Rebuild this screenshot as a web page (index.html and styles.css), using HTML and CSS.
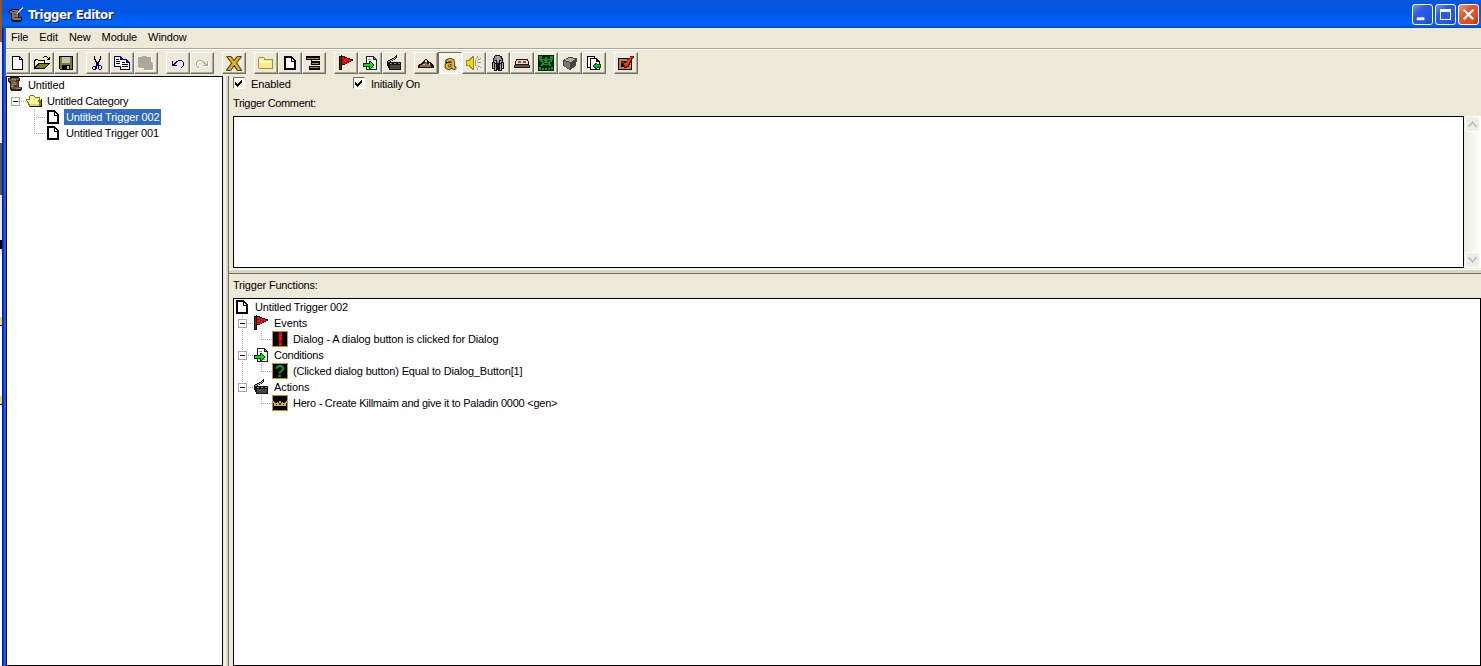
FILE: index.html
```
<!DOCTYPE html>
<html lang="en">
<head>
  <meta charset="UTF-8" />
  <meta name="viewport" content="width=device-width, initial-scale=1.0"/>
  <title>Trigger Editor</title>
  <link rel="stylesheet" href="styles.css">
</head>
<body>

  <!-- Shared icons -->
  <svg class="defs" width="0" height="0">
    <symbol id="scroll" viewBox="0 0 16 16">
      <path d="M1 1h2V0h9v1h1v3h-1v6h3v3h-1v1H4v-1H3V6H2V5H1z" fill="#2e2119"/>
      <path d="M2 2h2V1h8v2h-1v7h3v2H5v-1H4V4H2z" fill="#755746"/>
      <path d="M5 2h4v1H5zM6 5h3v1H6zM5 7h4v1H5zM9 11h4v1H9zM4 9h2v1H4z" fill="#a5836c"/>
      <path d="M9 3h2v2H9zM7 8h3v2H7z" fill="#4a3326"/>
    </symbol>
    <symbol id="page" viewBox="0 0 16 16">
      <path d="M2 1h8v1h1v1h1v1h1v1h1v10H2z" fill="#000"/>
      <path d="M4 3h5v4h3v6H4z" fill="#fff"/>
      <path d="M10 4h1v1h1v1h-2z" fill="#fff"/>
    </symbol>
    <symbol id="flag" viewBox="0 0 16 16">
      <path d="M1 1h2V0h1v1h3v1h2v1h3v1h3v2h-2v1h-2v1H9v1H7v1H4v5H1z" fill="#1c0505"/>
      <path d="M4 2h2v1h3v1h3v1h2v1h-2v1h-2v1H8v1H4z" fill="#e01414"/>
      <path d="M4 4h2v1H4zM7 5h2v1H7zM5 7h2v1H5zM9 6h2v1H9z" fill="#ad0808"/>
      <path d="M2 2h1v12H2z" fill="#5c2b2b"/>
    </symbol>
    <symbol id="cond" viewBox="0 0 16 16">
      <path d="M4 1h8v1h1v1h1v1h1v11H4z" fill="#222"/>
      <path d="M5 2h6v3h3v9H5z" fill="#f4f4f4"/>
      <path d="M12 3v1h1zM6 4h3v1H6zM6 12h6v1H6z" fill="#999"/>
      <path d="M1 8h6V6h2v1h1v1h1v1h1v2h-1v1h-1v1H9v1H7v-2H1z" fill="#003c00"/>
      <path d="M2 9h6V7h1v1h1v1h1v2h-1v1H9v1H8v-2H2z" fill="#08e018"/>
    </symbol>
    <symbol id="clap" viewBox="0 0 16 16">
      <path d="M1 6h1V5h2V4h2V3h2V2h1V1h1V0h1v3h-1v1H9v1H7v1H5v1h10v8H3v-2H2v-2H1z" fill="#141414"/>
      <path d="M2 6h2V5h2V4h2V3h1V2h1v1H9v1H8v1H6v1H4v1H2z" fill="#a8a8a8"/>
      <path d="M4 8h2v1H4zM8 8h2v1H8zM12 8h2v1h-2z" fill="#888"/>
      <path d="M4 10h10v4H4z" fill="#444"/>
    </symbol>
    <symbol id="check" viewBox="0 0 10 10">
      <path d="M1 4h1v1h1v1h1V5h1V4h1V3h1V2h1v3H7v1H6v1H5v1H4v1H3V8H2V7H1z" fill="#000"/>
    </symbol>
  </svg>

  <div class="desktop"><i class="dark"></i><i class="mark"></i><i class="fold"></i><i class="fold low"></i></div>

  <div class="window">
    <div class="titlebar">
      <svg class="icon" viewBox="0 0 16 16" shape-rendering="crispEdges">
        <path d="M1 3h2V2h8v1h1v2h-1v5h3v4h-1v1H4v-1H3V7H2V6H1z" fill="#221811"/>
        <path d="M2 4h2V3h6v8h3v2H5v-1H4V6H2z" fill="#84705c"/>
        <path d="M6 7h2v1H6zM6 10h3v1H6zM4 4h3v1H4z" fill="#4b382a"/>
        <path d="M14 0h1v2h-1v1h-1v1h-1v1h-1v1h-1v1H9V6h1V4h1V3h1V2h1V1h1z" fill="#c9cbd2"/>
      </svg>
      <span class="title">Trigger Editor</span>
      <div class="win-buttons">
        <span class="win-btn"><svg viewBox="0 0 20 20"><path d="M4 13h8v3H4z" fill="#fff"/></svg></span>
        <span class="win-btn"><svg viewBox="0 0 19 19" shape-rendering="crispEdges"><path d="M4 4h11v11H4zM5 7v7h9V7z" fill="#fff" fill-rule="evenodd"/></svg></span>
        <span class="win-btn close"><svg viewBox="0 0 20 20"><path d="M5 5l10 10M15 5L5 15" stroke="#fff" stroke-width="2.4"/></svg></span>
      </div>
    </div>

    <div class="menubar">
      <span>File</span><span>Edit</span><span>New</span><span>Module</span><span>Window</span>
    </div>

    <!-- Toolbar -->
    <div class="toolbar">
      <div class="group">
        <button><svg viewBox="0 0 16 16"><path d="M2 1h8v1h1v1h1v1h1v11H2z" fill="#000"/><path d="M3 2h6v3h3v9H3zM10 3v1h1z" fill="#fff"/></svg></button>
        <button><svg viewBox="0 0 16 16"><path d="M0 5h1V4h3v1h7v3h5v1h-1v1h-1v1h-1v1h-1v1h-1v1H0z" fill="#000"/><path d="M1 6h1V5h2v1h6v2H4v1H3v1H2v1H1z" fill="#ffff80"/><path d="M5 9h9v1h-1v1h-1v1h-1v1H2v-1h1v-1h1v-1h1z" fill="#808000"/><path d="M9 2h1V1h3v1h1v1h1V2h1v3h-3V4h1V3h-1V2h-3v1H9z" fill="#000"/></svg></button>
        <button><svg viewBox="0 0 16 16"><path d="M1 1h14v14H2v-1H1z" fill="#000"/><path d="M2 2h2v6h8V2h2v12h-2v-4H4v4H2z" fill="#808000"/><path d="M4 2h8v6H4zM9 11h2v3H9z" fill="#c0c0c0"/></svg></button>
      </div>
      <div class="group">
        <button><svg viewBox="0 0 16 16"><path d="M4 1h1v3h1v2h1v1h1V6h1V4h1V1h1v4h-1v2H9v2H6V7H5V5H4z" fill="#000"/><path d="M6 9h3v1h2v1h1v3h-1v1H9v-1H8v-3H7v3H6v1H3v-1H2v-2h1v-1h3zM4 12H3v2h2v-2zM9 11v3h2v-3z" fill="#000080" fill-rule="evenodd"/></svg></button>
        <button><svg viewBox="0 0 16 16"><path d="M0 1h7v1h1v1h1v1h4v1h1v1h1v1h1v8H6v-3H0z" fill="#000080"/><path d="M1 2h5v3h1v6H1zM7 5h5v3h3v6H7z" fill="#fff"/><path d="M2 4h3v1H2zM2 6h4v1H2zM2 8h4v1H2zM8 7h3v1H8zM8 9h6v1H8zM8 11h6v1H8z" fill="#000"/></svg></button>
        <button><svg viewBox="0 0 16 16"><path d="M1 2h4V1h5v1h4v6h2v8H7v-2H1z" fill="#fff"/><path d="M0 2h4V1h5v1h4v5h1v1h1v7H6v-2H1v-1H0z" fill="#aca899"/></svg></button>
      </div>
      <div class="group">
        <button><svg viewBox="0 0 16 16"><path d="M2 6h1v3h1V8h1V7h1V6h2V5h4v1h1v1h1v4h-1v1h-1v1h-1v-1h1v-1h1V7h-1V6H8v1H7v1H6v1H5v1h2v1H2z" fill="#000080"/></svg></button>
        <button><svg viewBox="0 0 16 16"><path d="M15 7h-1v3h-1V9h-1V8h-1V7H9V6H5v1H4v1H3v4h1v1h1v1h1v-1H5v-1H4V8h1V7h4v1h1v1h1v1h1v1h-2v1h5z" fill="#fff"/><path d="M14 6h-1v3h-1V8h-1V7h-1V6H8V5H4v1H3v1H2v4h1v1h1v1h1v-1H4v-1H3V7h1V6h4v1h1v1h1v1h1v1H9v1h5z" fill="#aca899"/></svg></button>
      </div>
      <div class="group">
        <button><svg viewBox="0 0 16 16"><text class="glyph outlined" x="8" y="15" font-size="18" textLength="14" lengthAdjust="spacingAndGlyphs">X</text></svg></button>
      </div>
      <div class="group">
        <button><svg viewBox="0 0 16 16"><path d="M0 3h1V2h5v1h1v1h8v10H1v-1H0z" fill="#a8942f"/><path d="M1 3h5v2h8v8H1z" fill="#fbea8a"/><path d="M1 4h4v2h7v2H1z" fill="#fffbd0"/></svg></button>
        <button><svg><use href="#page"/></svg></button>
        <button><svg viewBox="0 0 16 16"><path d="M0 1h14v4H6v1h8v4h-1v1h1v4H3v-4h2V5H0z" fill="#000"/><path d="M1 3h12v1H1zM6 8h7v1H6zM4 12h9v1H4z" fill="#b58a30"/><path d="M6 5h8v1H6zM5 10h9v1H5z" fill="#ece9d8"/></svg></button>
      </div>
      <div class="group">
        <button><svg><use href="#flag"/></svg></button>
        <button><svg><use href="#cond"/></svg></button>
        <button><svg><use href="#clap"/></svg></button>
      </div>
      <div class="group">
        <button><svg viewBox="0 0 16 16"><path d="M0 10h1V9h2V8h1V7h1V6h1V5h1V4h2v1h1v1h1v1h2v1h1v1h1v1h1v3H0z" fill="#24150d"/><path d="M4 9h2V8h1V7h2v2h2v1h2v2H2v-2h2z" fill="#8b6956"/><path d="M7 5h2v2H7zM11 8h1v2h-1zM5 9h2v1H5z" fill="#d0c6bd"/></svg></button>
        <button class="pressed"><svg viewBox="0 0 16 16"><text class="glyph outlined" x="8" y="14" font-size="19">a</text></svg></button>
        <button><svg viewBox="0 0 16 16"><path d="M0 5h3V4h1V3h1V2h1V1h2v14H6v-1H5v-1H4v-1H3v-1H0z" fill="#a38a12"/><path d="M1 6h3V5h1V4h1V3h1v10H6v-1H5v-1H4v-1H1z" fill="#f1d526"/><path d="M9 5h1v6H9zM11 7h4v1h-4zM11 5h1V4h2V3h1v1h-1v1h-2v1h-1zM11 10h1v1h2v1h1v1h-1v-1h-2v-1h-1zM10 3h1V1h1v2h-1v1h-1zM10 12h1v1h1v2h-1v-2h-1z" fill="#999"/></svg></button>
        <button><svg viewBox="0 0 16 16"><path d="M5 0h5v1h2v2h1v4h1v7h-2v2H8v-1H7v1H4v-2H2V7h1V3h1V1h1z" fill="#151518"/><path d="M5 1h5v1h1v2h1v3h-1V5H9v3H7V5H5v2H4V3h1z" fill="#7a8fae"/><path d="M7 1h2v5H7zM5 6h1v2H5zM10 6h1v2h-1z" fill="#c4ad78"/><path d="M3 8h1v5H3zM5 9h1v6H5zM10 9h1v6h-1zM12 8h1v5h-1z" fill="#aaa"/></svg></button>
        <button><svg viewBox="0 0 16 16"><path d="M2 4h12v2h1v4h1v3H0v-3h1V6h1z" fill="#211510"/><path d="M3 5h10v1h1v3H2V6h1z" fill="#ded9cd"/><path d="M4 6h3v2H4zM9 6h3v2H9z" fill="#b73f2b"/><path d="M1 10h14v2H1z" fill="#6d5143"/></svg></button>
        <button><svg viewBox="0 0 16 16"><path d="M0 0h16v16H0z" fill="#002008"/><path d="M1 1h3v3h3V2h2v2h3V1h3v4h-1v2h-2v2h1v2h-2v-1H5v1H3V9h1V7H2V5H1zM1 12h2v3H1zM4 13h2v2H4zM7 13h2v2H7zM10 13h2v2h-2zM13 12h2v3h-2z" fill="#07932b"/><path d="M4 5h2v1h1v1H5V6H4zM12 5h-2v1H9v1h2V6h1zM6 8h4v1H6z" fill="#001f08"/></svg></button>
        <button><svg viewBox="0 0 16 16"><path d="M1 5l6-3 8 1-1 8-6 4-7-4z" fill="#45443f"/><path d="M2 5l5-2 7 1-5 3z" fill="#aaa9a1"/><path d="M2 6l6 2v6l-6-3z" fill="#777670"/></svg></button>
        <button><svg viewBox="0 0 16 16"><path d="M1 1h8v2h2v1h1v1h1v1h1v9H4v-2H1z" fill="#000"/><path d="M2 2h6v1H4v9H2zM5 4h5v3h3v7H5z" fill="#fff"/><path d="M7 10h1V9h1V8h2v1h4v4h-4v1H9v-1H8v-1H7z" fill="#00551b"/><path d="M8 10h2V9h1v1h3v2h-3v1h-1v-1H8z" fill="#08b91c"/></svg></button>
      </div>
      <div class="group">
        <button><svg viewBox="0 0 16 16"><path d="M0 3h14v12H0z" fill="#000"/><path d="M1 4h12v10H1zM3 6v6h8V6z" fill="#bd9014" fill-rule="evenodd"/><path d="M3 6h3v2h2V6h1V4h1V3h2V1h4v2h-1v1h-1v2h-1v2h-1v2h-1v2H9v1H6v-2H5v-2H3z" fill="#5d1206"/><path d="M4 7h1v1h3V7h1V5h1V4h2V2h3v1h-2v2h-1v2h-1v2h-1v2H8v1H7v-2H6V8H4z" fill="#e93a1c"/></svg></button>
      </div>
    </div>

    <div class="content">
      <!-- Trigger tree -->
      <div class="sidebar">
        <div class="row"><svg class="ico"><use href="#scroll"/></svg><span class="label">Untitled</span></div>
        <div class="row cat">
          <i class="box"></i><i class="dots"></i>
          <svg class="ico" viewBox="0 0 16 16"><path d="M3 3h1V2h4v1h1v1h5v3h1v7H3v-2H2v-2H1V8H0V6h3z" fill="#8a7600"/><path d="M4 3h4v1h1v1h4v2H4z" fill="#fff3a0"/><path d="M1 7h11v2h1v4H4v-2H3V9H2V8H1z" fill="#fff7a8"/><path d="M4 11h9v2H4z" fill="#ecd65a"/><path d="M15 6h1v8H4v-1h11z" fill="#111"/></svg>
          <span class="label category">Untitled Category</span>
        </div>
        <div class="row trig"><i class="elbow through"></i><svg class="ico"><use href="#page"/></svg><span class="label selected">Untitled Trigger 002</span></div>
        <div class="row trig"><i class="elbow"></i><svg class="ico"><use href="#page"/></svg><span class="label name">Untitled Trigger 001</span></div>
      </div>

      <div class="v-splitter"></div>

      <div class="main">
        <div class="options">
          <label class="opt"><svg class="checkbox"><use href="#check"/></svg><span>Enabled</span></label>
          <label class="opt"><svg class="checkbox"><use href="#check"/></svg><span class="initially">Initially On</span></label>
        </div>
        <div class="caption">Trigger Comment:</div>
        <div class="comment">
          <div class="comment-text"></div>
          <div class="scrollbar">
            <span class="arrow"><svg viewBox="0 0 9 6"><path d="M4 0h1v1h1v1h1v1h1v1h1v2H7V5H6V4H5V3H4v1H3v1H2v1H0V4h1V3h1V2h1V1h1z"/></svg></span>
            <span class="arrow"><svg class="down" viewBox="0 0 9 6"><path d="M4 0h1v1h1v1h1v1h1v1h1v2H7V5H6V4H5V3H4v1H3v1H2v1H0V4h1V3h1V2h1V1h1z"/></svg></span>
          </div>
        </div>
        <div class="h-splitter"></div>
        <div class="caption functions-caption">Trigger Functions:</div>

        <!-- Trigger functions -->
        <div class="functions">
          <div class="row"><svg class="ico"><use href="#page"/></svg><span class="label name">Untitled Trigger 002</span></div>
          <div class="row cat"><i class="box"></i><i class="dots"></i><svg class="ico"><use href="#flag"/></svg><span class="label">Events</span></div>
          <div class="row trig line"><i class="elbow"></i><svg class="ico" viewBox="0 0 16 16"><path d="M0 0h16v16H0z" fill="#c69a18"/><path d="M1 1h14v14H1z" fill="#000"/><text class="glyph red" x="8" y="14" font-size="17">!</text></svg><span class="label event">Dialog - A dialog button is clicked for Dialog</span></div>
          <div class="row cat"><i class="box"></i><i class="dots"></i><svg class="ico"><use href="#cond"/></svg><span class="label conditions">Conditions</span></div>
          <div class="row trig line"><i class="elbow"></i><svg class="ico" viewBox="0 0 16 16"><path d="M0 0h16v16H0z" fill="#c69a18"/><path d="M1 1h14v14H1z" fill="#000"/><text class="glyph green" x="8" y="14" font-size="17">?</text></svg><span class="label condition">(Clicked dialog button) Equal to Dialog_Button[1]</span></div>
          <div class="row cat last"><i class="box"></i><i class="dots"></i><svg class="ico"><use href="#clap"/></svg><span class="label">Actions</span></div>
          <div class="row trig"><i class="elbow"></i><svg class="ico" viewBox="0 0 16 16"><path d="M0 0h16v16H0z" fill="#c69a18"/><path d="M1 1h14v14H1z" fill="#000"/><path d="M1 6h1v1h1v1h2V7h1v1h1V6h2v2h1V7h1v1h2V7h1V6h1v2h-1v3H2V8H1z" fill="#d8b02c"/><path d="M4 9h1v1H4zM7 8h2v2H7zM11 9h1v1h-1z" fill="#243a9a"/></svg><span class="label action">Hero - Create Killmaim and give it to Paladin 0000 &lt;gen&gt;</span></div>
        </div>
      </div>
    </div>
  </div>

</body>
</html>
```
FILE: styles.css
```
* {
  box-sizing: border-box;
}

body {
  margin: 0;
  width: 1481px;
  height: 666px;
  overflow: hidden;
  display: flex;
  background: #fff;
  color: #000;
  font-family: "Liberation Sans", Arial, sans-serif;
  font-size: 11px;
  line-height: 16px;
  letter-spacing: -0.1px;
}

svg {
  display: block;
}

.defs {
  position: absolute;
}

/* Letters inside icons */
.glyph {
  font-family: "Liberation Sans", Arial, sans-serif;
  font-weight: bold;
  letter-spacing: 0;
  text-anchor: middle;
}

.outlined {
  fill: #e0b322;
  stroke: #2a1f00;
  stroke-width: 1.6px;
  paint-order: stroke;
}

.red {
  fill: #f01010;
  stroke: #f01010;
  stroke-width: 0.8px;
}

.green {
  fill: #109a22;
}

/* Strip of the window behind */
.desktop {
  width: 2px;
  background: linear-gradient(#8b5a2c 0 42px, #ece9d8 42px 143px, #555 143px 195px, #ece9d8 195px 255px, #fff 255px);
}

.desktop i {
  display: block;
  width: 2px;
}

.desktop .dark { height: 240px; }
.desktop .mark { height: 9px; background: #000; }
.desktop .fold { height: 9px; margin-top: 68px; background: #e8dc78; border-bottom: 1px solid #000; }
.desktop .low { margin-top: 70px; }

.window {
  flex: 1;
  display: flex;
  flex-direction: column;
  padding-left: 4px;
  background: linear-gradient(90deg, #0019cf 0 1px, #0831d9 1px 2px, #1660e8 2px 4px, #ece9d8 4px);
}

.titlebar {
  height: 28px;
  margin-left: -4px;
  padding: 1px 2px 0 6px;
  display: flex;
  align-items: center;
  background: linear-gradient(#0a55dc 0, #0455e4 20%, #0054e3 45%, #0062fa 75%, #0064fb 88%, #0046c8 100%);
}

.titlebar .icon {
  width: 16px;
  height: 16px;
}

.title {
  flex: 1;
  margin-left: 4px;
  color: #fff;
  font: bold 13px "DejaVu Sans Condensed", "DejaVu Sans", sans-serif;
  letter-spacing: -0.4px;
  text-shadow: 1px 1px 0 #0a1883;
}

.win-buttons {
  display: flex;
  gap: 2px;
}

.win-btn {
  width: 21px;
  height: 21px;
  border: 1px solid #fff;
  border-radius: 3px;
  background: linear-gradient(135deg, #7292f0, #2c5ae6 35%, #2458ec 70%, #1945c8);
}

.win-btn.close {
  background: linear-gradient(135deg, #ee9b82, #e35a35 35%, #df4a20 75%, #b83210);
}

.win-btn svg {
  width: 19px;
  height: 19px;
}

.menubar {
  height: 20px;
  padding: 1px 5px 0;
  display: flex;
}

.menubar span { margin-right: 11px; }

.toolbar {
  height: 28px;
  padding-top: 3px;
  display: flex;
  gap: 8px;
  border-top: 1px solid #aca899;
  box-shadow: inset 0 1px #fff;
}

.group {
  display: flex;
}

.toolbar button {
  width: 24px;
  height: 22px;
  padding: 2px 3px;
  background: #ece9d8;
  border: 1px solid;
  border-color: #fff #716f64 #716f64 #fff;
  box-shadow: inset -1px -1px #aca899;
}

.toolbar button svg {
  width: 16px;
  height: 16px;
  shape-rendering: crispEdges;
}

.toolbar .pressed {
  background: repeating-conic-gradient(#ece9d8 0 25%, #fff 0 50%) 0 0 / 2px 2px;
  border-color: #716f64 #fff #fff #716f64;
  box-shadow: none;
}

.content {
  flex: 1;
  display: flex;
}

.sidebar {
  width: 217px;
  background: #fff;
  border: 1px solid #000;
}

.v-splitter {
  width: 6px;
  border-right: 1px solid #716f64;
  background: linear-gradient(90deg, #ece9d8 0 2px, #fff 2px 3px, #d7d3c5 3px 5px);
}

/* Tree rows */
.row {
  height: 16px;
  display: flex;
}

.ico {
  flex: none;
  width: 16px;
  height: 16px;
  shape-rendering: crispEdges;
}

.label {
  height: 16px;
  margin-left: 3px;
  padding: 0 2px;
  white-space: nowrap;
}

.category { letter-spacing: -0.22px; }
.name { letter-spacing: -0.15px; }
.conditions { letter-spacing: -0.25px; }
.event { letter-spacing: -0.12px; }
.condition { letter-spacing: -0.16px; }
.action { letter-spacing: -0.25px; }

.selected {
  padding-right: 1px;
  background: #316ac5;
  color: #fff;
  letter-spacing: -0.12px;
}

.box {
  flex: none;
  width: 9px;
  height: 9px;
  margin: 4px 0 0 4px;
  border: 1px solid #aca899;
  background: linear-gradient(#000, #000) 1px 3px / 5px 1px no-repeat #fff;
}

.dots {
  width: 6px;
  height: 1px;
  margin-top: 8px;
  background: repeating-linear-gradient(90deg, transparent 0 1px, #aca899 1px 2px);
}

.elbow {
  flex: none;
  width: 11px;
  height: 16px;
  margin-left: 27px;
  background:
    repeating-linear-gradient(#aca899 0 1px, transparent 1px 2px) 0 0 / 1px 9px no-repeat,
    repeating-linear-gradient(90deg, #aca899 0 1px, transparent 1px 2px) 0 8px / 11px 1px no-repeat;
}

.elbow.through {
  background-size: 1px 16px, 11px 1px;
}

.functions .line,
.functions .cat {
  background: repeating-linear-gradient(#aca899 0 1px, transparent 1px 2px) 8px 0 / 1px 16px no-repeat;
}

.functions .cat.last {
  background-size: 1px 8px;
}

.main {
  flex: 1;
  display: flex;
  flex-direction: column;
}

.options {
  height: 18px;
  padding: 1px 0 0 4px;
  display: flex;
}

.opt {
  width: 120px;
  display: flex;
  line-height: 14px;
}

.opt span { margin-left: 6px; }
.opt .initially { letter-spacing: -0.2px; }

.checkbox {
  width: 12px;
  height: 12px;
  background: #fff;
  border: 1px solid;
  border-color: #716f64 #fff #fff #716f64;
  shape-rendering: crispEdges;
}

.caption {
  height: 22px;
  padding: 1px 0 0 4px;
  letter-spacing: -0.35px;
}

.comment {
  height: 152px;
  padding-left: 4px;
  display: flex;
}

.comment-text {
  flex: 1;
  background: #fff;
  border: 1px solid #000;
}

.scrollbar {
  width: 17px;
  display: flex;
  flex-direction: column;
  justify-content: space-between;
  background: linear-gradient(90deg, #eeede5, #fefefb);
}

.arrow {
  width: 15px;
  height: 16px;
  margin-left: 1px;
  display: flex;
  align-items: center;
  justify-content: center;
  border: 1px solid #fff;
  border-radius: 3px;
  background: #efeee6;
}

.arrow svg {
  width: 9px;
  height: 6px;
  fill: #c6c5b9;
  shape-rendering: crispEdges;
}

.arrow .down {
  transform: rotate(180deg);
}

.h-splitter {
  height: 6px;
  border-bottom: 1px solid #716f64;
  background: linear-gradient(#ece9d8 0 1px, #fff 1px 2px, #d7d3c5 2px 5px);
}

.functions-caption {
  height: 24px;
  padding-top: 3px;
  letter-spacing: -0.2px;
}

.functions {
  flex: 1;
  margin-left: 4px;
  background: #fff;
  border: 1px solid #000;
}
```
